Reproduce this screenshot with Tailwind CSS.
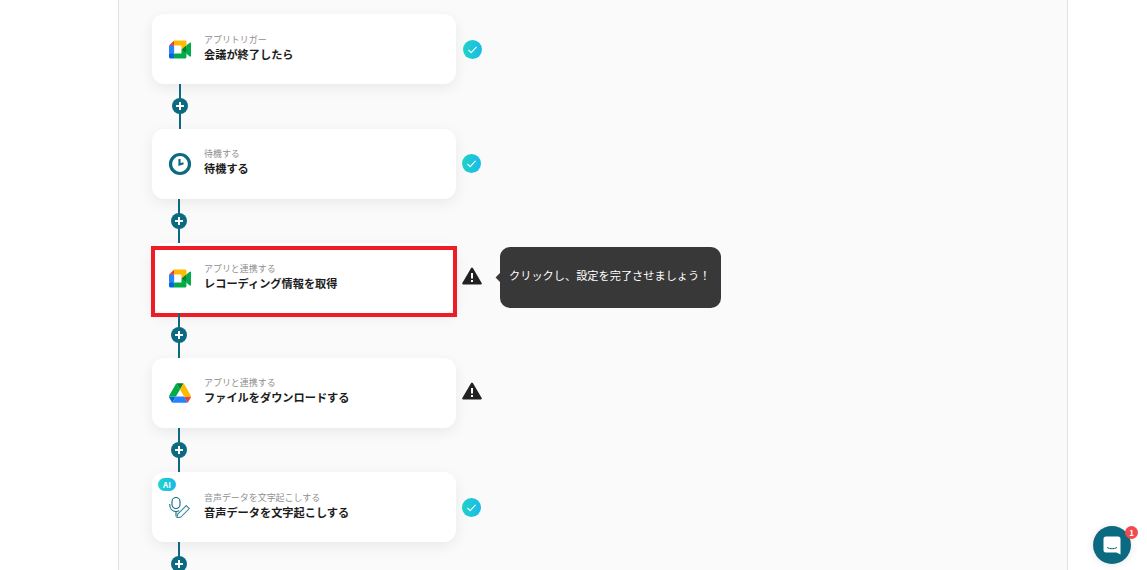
<!DOCTYPE html>
<html lang="ja">
<head>
  <meta charset="UTF-8" />
  <title>フローボット</title>
  <script src="https://cdn.jsdelivr.net/npm/@tailwindcss/browser@4"></script>
</head>
<body class="bg-white h-[570px] overflow-hidden relative font-['Noto_Sans_CJK_JP','Noto_Sans',sans-serif]">
  <main class="ml-[118px] w-[950px] h-[570px] overflow-hidden bg-[#fafafa] border-x border-[#e3e3e3] pl-[33px] pt-[14px]">

    <!-- step 1 -->
    <section class="flex items-center h-[70px]">
      <div class="w-[304px] h-[70px] bg-white rounded-xl shadow-[0_4px_14px_rgba(0,0,0,0.07)] flex items-center pl-[17px] shrink-0">
        <svg class="w-[22px] h-[19px] mr-[13px] shrink-0" viewBox="0 0 87.5 72">
          <path fill="#00832d" d="M49.5 36l8.53 9.75 11.47 7.33 2-17.02-2-16.64-11.69 6.44z"/>
          <path fill="#0066da" d="M0 51.5V66c0 3.315 2.685 6 6 6h14.5l3-10.96-3-9.54-9.95-3z"/>
          <path fill="#e94235" d="M20.5 0L0 20.5l10.55 3 9.95-3 2.95-9.41z"/>
          <path fill="#2684fc" d="M20.5 20.5H0v31h20.5z"/>
          <path fill="#00ac47" d="M82.6 8.68L69.5 19.42v33.66l13.16 10.79c1.97 1.54 4.85.135 4.85-2.37V11c0-2.535-2.945-3.925-4.91-2.32zM49.5 36v15.5h-29V72h43c3.315 0 6-2.685 6-6V53.08z"/>
          <path fill="#ffba00" d="M63.5 0h-43v20.5h29V36l20-16.57V6c0-3.315-2.685-6-6-6z"/>
        </svg>
        <div class="-mt-[4px]">
          <p class="text-[8.96px] leading-[13px] text-[#8f8f8f]">アプリトリガー</p>
          <p class="text-[11.2px] leading-[16px] font-semibold text-[#1c1c1c]">会議が終了したら</p>
        </div>
      </div>
      <span class="ml-[7px] w-[19px] h-[19px] rounded-full bg-linear-to-r from-[#22d3c5] to-[#1bb9ea] flex items-center justify-center">
        <svg class="w-[11px] h-[11px]" viewBox="0 0 12 12" fill="none" stroke="white" stroke-width="1.2"><path d="M1.5 6.5l3 3 6-6.5"/></svg>
      </span>
    </section>
    <div class="w-[2px] h-[44.5px] bg-[#0c6a80] ml-[27px] relative">
      <span class="absolute left-[-7px] top-[14px] w-4 h-4 rounded-full bg-[#0c6a80] flex items-center justify-center">
        <svg class="w-2 h-2" viewBox="0 0 8 8" stroke="white" stroke-width="2"><path d="M4 0v8M0 4h8"/></svg>
      </span>
    </div>

    <!-- step 2 -->
    <section class="flex items-center h-[70px]">
      <div class="w-[304px] h-[70px] bg-white rounded-xl shadow-[0_4px_14px_rgba(0,0,0,0.07)] flex items-center pl-[16px] shrink-0">
        <svg class="w-[24px] h-[24px] mr-[12px] shrink-0" viewBox="0 0 24 24" fill="none" stroke="#0c6a80">
          <circle cx="12" cy="12" r="9.5" stroke-width="3.2"/>
          <path d="M11.5 7v5.5l4-1.2" stroke-width="2.2"/>
        </svg>
        <div class="-mt-[4px]">
          <p class="text-[8.96px] leading-[13px] text-[#8f8f8f]">待機する</p>
          <p class="text-[11.2px] leading-[16px] font-semibold text-[#1c1c1c]">待機する</p>
        </div>
      </div>
      <span class="ml-[6px] w-[19px] h-[19px] rounded-full bg-linear-to-r from-[#22d3c5] to-[#1bb9ea] flex items-center justify-center">
        <svg class="w-[11px] h-[11px]" viewBox="0 0 12 12" fill="none" stroke="white" stroke-width="1.2"><path d="M1.5 6.5l3 3 6-6.5"/></svg>
      </span>
    </section>
    <div class="w-[2px] h-[44.5px] bg-[#0c6a80] ml-[26px] relative">
      <span class="absolute left-[-7px] top-[14px] w-4 h-4 rounded-full bg-[#0c6a80] flex items-center justify-center">
        <svg class="w-2 h-2" viewBox="0 0 8 8" stroke="white" stroke-width="2"><path d="M4 0v8M0 4h8"/></svg>
      </span>
    </div>

    <!-- step 3 -->
    <section class="flex items-center h-[70px] relative">
      <div class="w-[304px] h-[70px] bg-white rounded-xl shadow-[0_4px_14px_rgba(0,0,0,0.07)] flex items-center pl-[17px] shrink-0">
        <svg class="w-[22px] h-[19px] mr-[13px] shrink-0" viewBox="0 0 87.5 72">
          <path fill="#00832d" d="M49.5 36l8.53 9.75 11.47 7.33 2-17.02-2-16.64-11.69 6.44z"/>
          <path fill="#0066da" d="M0 51.5V66c0 3.315 2.685 6 6 6h14.5l3-10.96-3-9.54-9.95-3z"/>
          <path fill="#e94235" d="M20.5 0L0 20.5l10.55 3 9.95-3 2.95-9.41z"/>
          <path fill="#2684fc" d="M20.5 20.5H0v31h20.5z"/>
          <path fill="#00ac47" d="M82.6 8.68L69.5 19.42v33.66l13.16 10.79c1.97 1.54 4.85.135 4.85-2.37V11c0-2.535-2.945-3.925-4.91-2.32zM49.5 36v15.5h-29V72h43c3.315 0 6-2.685 6-6V53.08z"/>
          <path fill="#ffba00" d="M63.5 0h-43v20.5h29V36l20-16.57V6c0-3.315-2.685-6-6-6z"/>
        </svg>
        <div class="-mt-[4px]">
          <p class="text-[8.96px] leading-[13px] text-[#8f8f8f]">アプリと連携する</p>
          <p class="text-[11.2px] leading-[16px] font-semibold text-[#1c1c1c]">レコーディング情報を取得</p>
        </div>
      </div>
      <svg class="ml-[6px] -mt-[4px] w-5 h-[18px]" viewBox="0 0 20 18"><path d="M10 1.5L18.8 16.5H1.2z" fill="#222" stroke="#222" stroke-width="2" stroke-linejoin="round"/><path d="M10 6v5.5M10 13v2" stroke="white" stroke-width="2"/></svg>
      <!-- tooltip -->
      <div class="ml-[18px] -mt-[2px] w-[221px] h-[61px] bg-[#383838] rounded-[10px] flex items-center pl-[9px] pb-[3px] text-[11.2px] text-white relative">
        <span class="absolute left-[-3px] top-[27px] w-[7px] h-[7px] bg-[#383838] rotate-45"></span>
        クリックし、設定を完了させましょう！
      </div>
      <!-- red highlight -->
      <div class="absolute left-[-1px] top-[3px] w-[306px] h-[71px] border-[4px] border-[#ee1c25]"></div>
    </section>
    <div class="w-[2px] h-[44.5px] bg-[#0c6a80] ml-[26px] relative">
      <span class="absolute left-[-7px] top-[14px] w-4 h-4 rounded-full bg-[#0c6a80] flex items-center justify-center">
        <svg class="w-2 h-2" viewBox="0 0 8 8" stroke="white" stroke-width="2"><path d="M4 0v8M0 4h8"/></svg>
      </span>
    </div>

    <!-- step 4 -->
    <section class="flex items-center h-[70px]">
      <div class="w-[304px] h-[70px] bg-white rounded-xl shadow-[0_4px_14px_rgba(0,0,0,0.07)] flex items-center pl-[17px] shrink-0">
        <svg class="w-[22px] h-[20px] mr-[13px] shrink-0" viewBox="0 0 87.3 78">
          <path d="m6.6 66.85 3.85 6.65c.8 1.4 1.95 2.5 3.3 3.3l13.75-23.8h-27.5c0 1.55.4 3.1 1.2 4.5z" fill="#0066da"/>
          <path d="m43.65 25-13.75-23.8c-1.35.8-2.5 1.9-3.3 3.3l-25.4 44a9.06 9.06 0 0 0 -1.2 4.5h27.5z" fill="#00ac47"/>
          <path d="m73.55 76.8c1.35-.8 2.5-1.9 3.3-3.3l1.6-2.75 7.65-13.25c.8-1.4 1.2-2.95 1.2-4.5h-27.502l5.852 11.5z" fill="#ea4335"/>
          <path d="m43.65 25 13.75-23.8c-1.35-.8-2.9-1.2-4.5-1.2h-18.5c-1.6 0-3.15.45-4.5 1.2z" fill="#00832d"/>
          <path d="m59.8 53h-32.3l-13.75 23.8c1.35.8 2.9 1.2 4.5 1.2h50.8c1.6 0 3.15-.45 4.5-1.2z" fill="#2684fc"/>
          <path d="m73.4 26.5-12.7-22c-.8-1.4-1.95-2.5-3.3-3.3l-13.75 23.8 16.15 28h27.45c0-1.55-.4-3.1-1.2-4.5z" fill="#ffba00"/>
        </svg>
        <div class="-mt-[4px]">
          <p class="text-[8.96px] leading-[13px] text-[#8f8f8f]">アプリと連携する</p>
          <p class="text-[11.2px] leading-[16px] font-semibold text-[#1c1c1c]">ファイルをダウンロードする</p>
        </div>
      </div>
      <svg class="ml-[6px] -mt-[4px] w-5 h-[18px]" viewBox="0 0 20 18"><path d="M10 1.5L18.8 16.5H1.2z" fill="#222" stroke="#222" stroke-width="2" stroke-linejoin="round"/><path d="M10 6v5.5M10 13v2" stroke="white" stroke-width="2"/></svg>
    </section>
    <div class="w-[2px] h-[44.5px] bg-[#0c6a80] ml-[26px] relative">
      <span class="absolute left-[-7px] top-[14px] w-4 h-4 rounded-full bg-[#0c6a80] flex items-center justify-center">
        <svg class="w-2 h-2" viewBox="0 0 8 8" stroke="white" stroke-width="2"><path d="M4 0v8M0 4h8"/></svg>
      </span>
    </div>

    <!-- step 5 -->
    <section class="flex items-center h-[70px]">
      <div class="w-[304px] h-[70px] bg-white rounded-xl shadow-[0_4px_14px_rgba(0,0,0,0.07)] flex items-center pl-[17px] shrink-0 relative">
        <span class="absolute left-[6px] top-[6px] w-[18px] h-[13px] rounded-full bg-linear-to-r from-[#22d3c5] to-[#1bb9ea] text-white text-[8px] leading-[13px] font-bold text-center">AI</span>
        <svg class="w-[22px] h-[21px] mr-[13px] shrink-0" viewBox="0 0 22 21" fill="none" stroke="#0c6a80" stroke-width="1.1">
          <rect x="3" y="0.5" width="8" height="11" rx="4"/>
          <path d="M0.7 7c0 4.5 2.6 7.5 6.3 7.5 1.2 0 2.3-.3 3.2-.9M7 14.5v5"/>
          <path d="M17.3 8.6l3 3-8.5 8.5-4 1 1-4z" stroke="#3a8597"/>
        </svg>
        <div class="-mt-[4px]">
          <p class="text-[8.96px] leading-[13px] text-[#8f8f8f]">音声データを文字起こしする</p>
          <p class="text-[11.2px] leading-[16px] font-semibold text-[#1c1c1c]">音声データを文字起こしする</p>
        </div>
      </div>
      <span class="ml-[6px] w-[19px] h-[19px] rounded-full bg-linear-to-r from-[#22d3c5] to-[#1bb9ea] flex items-center justify-center">
        <svg class="w-[11px] h-[11px]" viewBox="0 0 12 12" fill="none" stroke="white" stroke-width="1.2"><path d="M1.5 6.5l3 3 6-6.5"/></svg>
      </span>
    </section>
    <div class="w-[2px] h-[44.5px] bg-[#0c6a80] ml-[26px] relative">
      <span class="absolute left-[-7px] top-[14px] w-4 h-4 rounded-full bg-[#0c6a80] flex items-center justify-center">
        <svg class="w-2 h-2" viewBox="0 0 8 8" stroke="white" stroke-width="2"><path d="M4 0v8M0 4h8"/></svg>
      </span>
    </div>
  </main>

  <!-- chat launcher -->
  <button class="absolute left-[1093px] top-[526px] w-[38px] h-[38px] rounded-full bg-[#0c6a80] flex items-center justify-center shadow-[0_1px_8px_rgba(0,0,0,0.1)]">
    <svg class="w-[18px] h-[19px]" viewBox="0 0 18 19">
      <path d="M3 0.5h12a2.5 2.5 0 0 1 2.5 2.5v15.5l-4-2H3A2.5 2.5 0 0 1 .5 14V3A2.5 2.5 0 0 1 3 .5z" fill="white"/>
      <path d="M4 11.5c3 1.7 7 1.7 10 0" fill="none" stroke="#0c6a80" stroke-width="1"/>
    </svg>
  </button>
  <span class="absolute left-[1125px] top-[526px] w-[13px] h-[13px] rounded-full bg-[#f04a4f] text-white text-[8px] leading-[13px] font-bold text-center">1</span>
</body>
</html>
